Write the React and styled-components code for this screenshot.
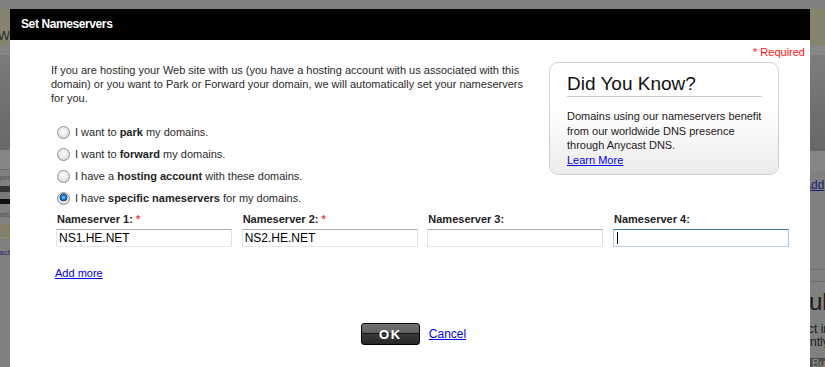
import styled, { createGlobalStyle } from 'styled-components'

const GlobalStyle = createGlobalStyle`
  html, body {
    margin: 0;
    padding: 0;
  }
  body {
    background: #808080;
    font-family: "Liberation Sans", Arial, sans-serif;
  }
`

const backdropLeft = [
  { h: 9, bg: '#808080' },
  { h: 37, bg: '#86846f', text: 'Your W', justify: 'flex-end', align: 'flex-end', fs: 13, color: '#2c2c2c', pad: 4 },
  { h: 9, bg: '#858585' },
  { h: 95, bg: 'linear-gradient(#7a7a7a, #686868)' },
  { h: 20, bg: '#868686', line: '#6c6c6c' },
  { h: 16, bg: '#808080', text: 'Session', justify: 'flex-end', fs: 8, color: '#4f4d36' },
  { h: 6, bg: '#343434' },
  { h: 7, bg: '#7a7a7a' },
  { h: 5, bg: '#0e0e0e' },
  { h: 20, bg: '#808080', text: 'details', justify: 'flex-end', fs: 7, color: '#555' },
  { h: 14, bg: '#828068', line: '#8e8b63' },
  { h: 30, bg: '#808080', text: 'Contact', justify: 'flex-end', fs: 8, color: '#27276c' },
  { h: 99, bg: '#808080' },
]

const backdropRight = [
  { h: 9, bg: '#808080' },
  { h: 37, bg: '#86846f' },
  { h: 9, bg: '#878787' },
  { h: 96, bg: 'linear-gradient(#7d7d7d, #676767)' },
  { h: 20, bg: '#868686' },
  { h: 28, bg: '#808080', text: 'Add', shift: -7, fs: 12, color: '#1f1f72', under: true },
  { h: 71, bg: '#808080', line: '#6a6a6a' },
  { h: 12, bg: '#808080', line: '#6a6a6a' },
  { h: 40, bg: '#808080', text: 'ub', shift: -1, fs: 24, color: '#1c1c1c' },
  { h: 13, bg: '#808080', text: 'ct in', shift: -2, fs: 12, color: '#1c1c1c' },
  { h: 13, bg: '#808080', text: 'ntly', shift: 0, fs: 12, color: '#1c1c1c' },
  { h: 10, bg: '#808080' },
  { h: 20, bg: '#4d4d4d', text: 'Bu', shift: 2, fs: 11, color: '#9a9a9a', align: 'flex-start' },
]

const fields = [
  { label: 'Nameserver 1:', required: true, value: 'NS1.HE.NET' },
  { label: 'Nameserver 2:', required: true, value: 'NS2.HE.NET' },
  { label: 'Nameserver 3:', value: '' },
  { label: 'Nameserver 4:', value: '', focused: true },
]

function Backdrop({ width, bands }) {
  return (
    <Strip $w={width}>
      {bands.map((b, i) => (
        <Band
          key={i}
          $h={b.h}
          $bg={b.bg}
          $justify={b.justify}
          $align={b.align}
          $fs={b.fs}
          $color={b.color}
          $line={b.line}
          $pad={b.pad}
        >
          {b.text && (
            <BandText $shift={b.shift || 0} $under={b.under}>
              {b.text}
            </BandText>
          )}
        </Band>
      ))}
    </Strip>
  )
}

export default function App() {
  return (
    <>
      <GlobalStyle />
      <Page>
        <Backdrop width={10} bands={backdropLeft} />

        <Modal>
          <Header>Set Nameservers</Header>
          <Body>
            <Required>* Required</Required>

            <TopRow>
              <Intro>
                <Para>
                  If you are hosting your Web site with us (you have a hosting account with us associated with this
                  <br />
                  domain) or you want to Park or Forward your domain, we will automatically set your nameservers
                  <br />
                  for you.
                </Para>

                <Options>
                  <Option>
                    <Radio name="ns" />
                    <span>I want to <b>park</b> my domains.</span>
                  </Option>
                  <Option>
                    <Radio name="ns" />
                    <span>I want to <b>forward</b> my domains.</span>
                  </Option>
                  <Option>
                    <Radio name="ns" />
                    <span>I have a <b>hosting account</b> with these domains.</span>
                  </Option>
                  <Option>
                    <Radio name="ns" defaultChecked />
                    <span>I have <b>specific nameservers</b> for my domains.</span>
                  </Option>
                </Options>
              </Intro>

              <Tip>
                <TipTitle>Did You Know?</TipTitle>
                <TipText>
                  Domains using our nameservers benefit
                  <br />
                  from our worldwide DNS presence
                  <br />
                  through Anycast DNS.
                  <br />
                  <Link href="#">Learn More</Link>
                </TipText>
              </Tip>
            </TopRow>

            <Fields>
              {fields.map((f) => (
                <Field key={f.label}>
                  <FieldLabel>
                    {f.label}
                    {f.required && <Star> *</Star>}
                  </FieldLabel>
                  <TextBox defaultValue={f.value} $focus={f.focused} />
                  {f.focused && <Caret />}
                </Field>
              ))}
            </Fields>

            <AddMore href="#">Add more</AddMore>

            <Actions>
              <OkButton>OK</OkButton>
              <CancelLink href="#">Cancel</CancelLink>
            </Actions>
          </Body>
        </Modal>

        <Backdrop width={15} bands={backdropRight} />
      </Page>
    </>
  )
}

const Page = styled.div`
  display: flex;
  width: 825px;
  height: 367px;
  overflow: hidden;
  background: #808080;
`

const Strip = styled.div`
  width: ${(p) => p.$w}px;
  flex: none;
  display: flex;
  flex-direction: column;
  overflow: hidden;
`

const Band = styled.div`
  flex: none;
  box-sizing: border-box;
  height: ${(p) => p.$h}px;
  background: ${(p) => p.$bg};
  display: flex;
  align-items: ${(p) => p.$align || 'center'};
  justify-content: ${(p) => p.$justify || 'flex-start'};
  padding-bottom: ${(p) => p.$pad || 0}px;
  overflow: hidden;
  white-space: nowrap;
  color: ${(p) => p.$color || '#1c1c1c'};
  font-size: ${(p) => p.$fs || 11}px;
  line-height: 1;
  border-bottom: ${(p) => (p.$line ? `1px solid ${p.$line}` : 'none')};
`

const BandText = styled.span`
  flex: none;
  margin-left: ${(p) => p.$shift}px;
  text-decoration: ${(p) => (p.$under ? 'underline' : 'none')};
`

const Modal = styled.div`
  width: 800px;
  flex: none;
  margin-top: 9px;
  background: #fff;
  display: flex;
  flex-direction: column;
`

const Header = styled.h2`
  margin: 0;
  height: 31px;
  background: #000;
  color: #fff;
  font-size: 12px;
  font-weight: bold;
  letter-spacing: -0.4px;
  line-height: 31px;
  padding-left: 11px;
`

const Body = styled.div`
  padding: 6px 5px 0 41px;
  color: #2a2a2a;
  font-size: 11px;
`

const Required = styled.div`
  text-align: right;
  color: #ff1010;
  line-height: 13px;
`

const TopRow = styled.div`
  display: flex;
  align-items: flex-start;
  gap: 13px;
  margin-top: 3px;
`

const Intro = styled.div`
  width: 485px;
  padding-top: 1px;
`

const Para = styled.p`
  margin: 0;
  line-height: 14px;
  white-space: nowrap;
`

const Options = styled.ul`
  list-style: none;
  margin: 16px 0 0;
  padding: 0 0 0 6px;
`

const Option = styled.li`
  display: flex;
  align-items: center;
  gap: 5px;
  height: 22px;
  b {
    color: #1e1e1e;
  }
`

const Radio = styled.input.attrs({ type: 'radio' })`
  appearance: none;
  margin: 0;
  width: 13px;
  height: 13px;
  box-sizing: border-box;
  border-radius: 50%;
  border: 1px solid #8c8e90;
  background: radial-gradient(circle at 50% 40%, #fcfcfc 0, #ececec 45%, #c9c9c9 100%);
  &:checked {
    background:
      radial-gradient(circle at 50% 40%, #8fd0ff 0, #2c86d6 1.8px, #175aa0 3.2px, #0f3f74 3.8px, transparent 4.2px),
      radial-gradient(circle at 50% 40%, #fcfcfc 0, #ececec 45%, #c9c9c9 100%);
  }
`

const Tip = styled.aside`
  width: 230px;
  box-sizing: border-box;
  border: 1px solid #d0d0d0;
  border-radius: 9px;
  background: linear-gradient(#fff 0, #fff 40%, #ececec 100%);
  padding: 10px 16px 7px 17px;
  color: #222;
`

const TipTitle = styled.h3`
  margin: 0;
  font-size: 19px;
  font-weight: normal;
  line-height: 22px;
  color: #111;
  padding-bottom: 1px;
  border-bottom: 1px solid #cdcdcd;
`

const TipText = styled.p`
  margin: 12px 0 0;
  line-height: 14.5px;
  white-space: nowrap;
`

const Link = styled.a`
  color: #0000ee;
  text-decoration: underline;
`

const Fields = styled.div`
  display: grid;
  grid-template-columns: repeat(4, 176px);
  column-gap: 9.67px;
  margin: 4px 0 0 5px;
`

const Field = styled.label`
  display: flex;
  flex-direction: column;
  gap: 3px;
  position: relative;
`

const FieldLabel = styled.span`
  font-weight: bold;
  color: #222;
  padding-left: 1px;
  line-height: 13px;
`

const Star = styled.span`
  color: #ee3a3a;
`

const TextBox = styled.input`
  height: 18px;
  box-sizing: border-box;
  border: 1px solid;
  border-color: ${(p) =>
    p.$focus ? '#3d7bad #a4c9e3 #b5cfe7 #a4c9e3' : '#abadb3 #dbdfe6 #e3e9ef #e2e3ea'};
  padding: 0 2px;
  font: 12px "Liberation Sans", Arial, sans-serif;
  color: #000;
  outline: none;
`

const Caret = styled.span`
  position: absolute;
  left: 4px;
  bottom: 3px;
  width: 1px;
  height: 12px;
  background: #000;
`

const AddMore = styled.a`
  display: inline-block;
  margin: 20px 0 0 4px;
  line-height: 13px;
  color: #0000ee;
  text-decoration: underline;
`

const Actions = styled.div`
  display: flex;
  justify-content: center;
  align-items: center;
  gap: 9px;
  margin-top: 43px;
  padding-right: 29px;
`

const OkButton = styled.button`
  width: 59px;
  height: 22px;
  padding: 0;
  border: 1px solid #000;
  border-radius: 3px;
  background: linear-gradient(#727272 0, #5f5f5f 45%, #121212 45%, #121212 52%, #3a3a3a 52%, #262626 100%);
  color: #fff;
  font: bold 13px "Liberation Sans", Arial, sans-serif;
  letter-spacing: 1.5px;
  cursor: pointer;
`

const CancelLink = styled.a`
  font-size: 12px;
  color: #0000ee;
  text-decoration: underline;
`
